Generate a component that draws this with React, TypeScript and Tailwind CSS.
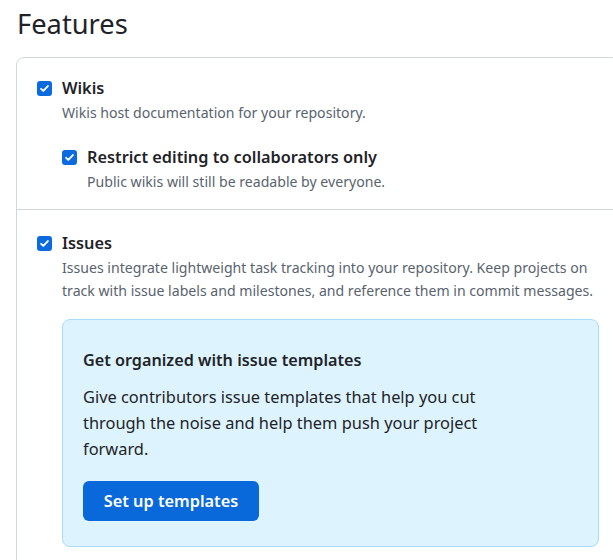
import React from 'react';

// Checkbox drawn as a static, checked box (matches the browser's blue tick)
function Check() {
  return (
    <span className="mt-[6px] flex h-[15px] w-[15px] shrink-0 items-center justify-center rounded-[3px] bg-[#0b6bde]">
      <svg viewBox="0 0 12 12" className="h-[11px] w-[11px]" fill="none">
        <path d="M2.3 6.3l2.4 2.4 5-5.4" stroke="#fff" strokeWidth={2} strokeLinecap="round" strokeLinejoin="round" />
      </svg>
    </span>
  );
}

function Option({ label, note, children }: { label: string; note: React.ReactNode; children?: React.ReactNode }) {
  return (
    <div className="flex gap-[10px]">
      <Check />
      <div className="min-w-0 flex-1">
        <div className="text-[16.3px] font-semibold leading-[26px] text-[#1f2328]">{label}</div>
        <p className="mt-px text-[14.1px] leading-[22.5px] text-[#59636e]">{note}</p>
        {children}
      </div>
    </div>
  );
}

export default function App() {
  return (
    <div
      className="min-h-screen overflow-hidden bg-white pl-4 pt-[5px]"
      style={{ fontFamily: '"Noto Sans", "Segoe UI", sans-serif' }}
    >
      <h2 className="pl-px text-[27.3px] font-normal leading-[38px] text-[#1f2328]">Features</h2>

      <div className="mt-[14px] w-[604px] rounded-t-lg border border-[#d1d9e0]">
        <div className="px-[20px] pb-[16px] pt-[17px]">
          <Option label="Wikis" note="Wikis host documentation for your repository.">
            <div className="mt-[19px]">
              <Option label="Restrict editing to collaborators only" note="Public wikis will still be readable by everyone." />
            </div>
          </Option>
        </div>

        <div className="border-t border-[#d1d9e0] px-[20px] pb-6 pt-[20px]">
          <Option
            label="Issues"
            note="Issues integrate lightweight task tracking into your repository. Keep projects on track with issue labels and milestones, and reference them in commit messages."
          >
            <div className="mt-[17px] rounded-lg border border-[#a8dcff] bg-[#ddf4ff] px-[20px] pb-[25px] pt-[27px]">
              <h3 className="text-[16.2px] font-semibold leading-[26px] text-[#1f2328]">Get organized with issue templates</h3>
              <p className="mt-[11px] max-w-[410px] text-[16.4px] leading-[26px] text-[#1f2328]">
                Give contributors issue templates that help you cut through the noise and help them push your project forward.
              </p>
              <button className="mt-[19px] flex h-10 w-[176px] items-center justify-center rounded-md bg-[#0969da] text-[16.3px] font-semibold text-white">
                Set up templates
              </button>
            </div>
          </Option>
        </div>
      </div>
    </div>
  );
}
